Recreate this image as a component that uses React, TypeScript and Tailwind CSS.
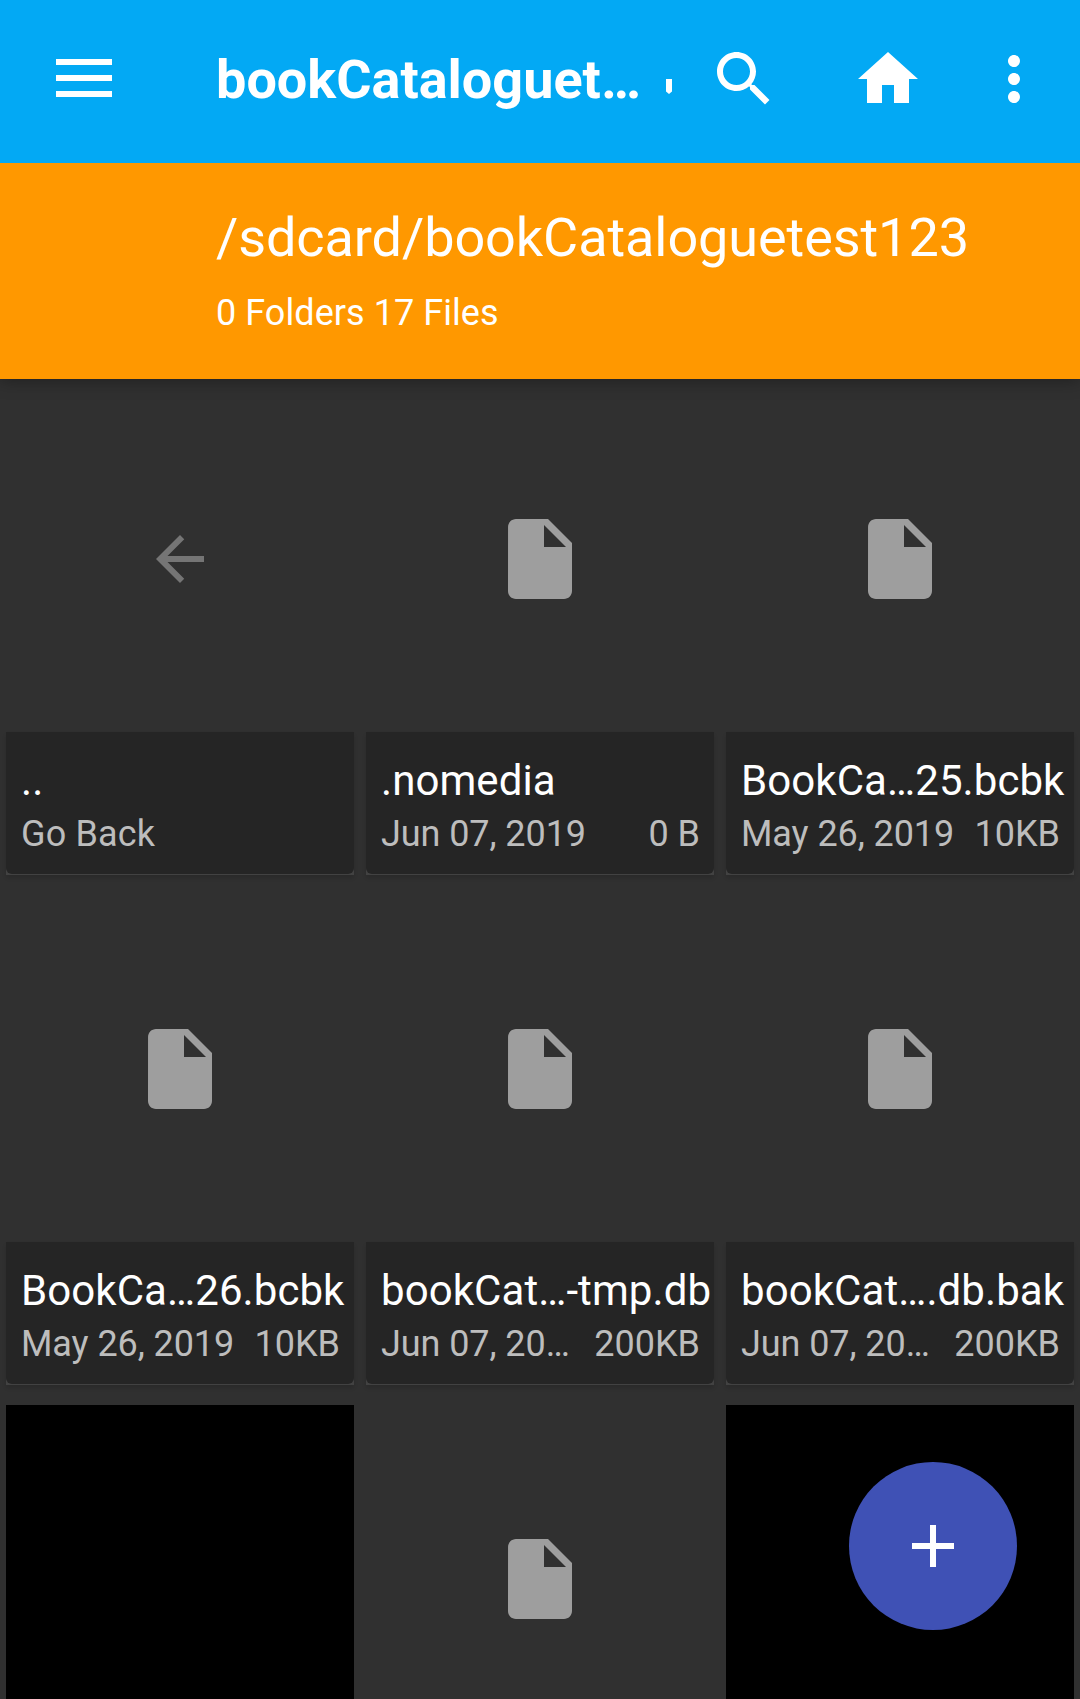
import React from 'react';

type Entry = {
  name?: string;
  date?: string;
  size?: string;
  kind: 'back' | 'file' | 'thumb';
};

const entries: Entry[] = [
  { name: '..', date: 'Go Back', kind: 'back' },
  { name: '.nomedia', date: 'Jun 07, 2019', size: '0 B', kind: 'file' },
  { name: 'BookCa…25.bcbk', date: 'May 26, 2019', size: '10KB', kind: 'file' },
  { name: 'BookCa…26.bcbk', date: 'May 26, 2019', size: '10KB', kind: 'file' },
  { name: 'bookCat…-tmp.db', date: 'Jun 07, 20…', size: '200KB', kind: 'file' },
  { name: 'bookCat….db.bak', date: 'Jun 07, 20…', size: '200KB', kind: 'file' },
  { kind: 'thumb' },
  { kind: 'file' },
  { kind: 'thumb' },
];

function Icon({ d, className }: { d: string; className: string }) {
  return (
    <svg viewBox="0 0 24 24" fill="currentColor" className={className}>
      <path d={d} />
    </svg>
  );
}

const paths = {
  search:
    'M15.5 14h-.79l-.28-.27C15.41 12.59 16 11.11 16 9.5 16 5.91 13.09 3 9.5 3S3 5.91 3 9.5 5.91 16 9.5 16c1.61 0 3.09-.59 4.23-1.57l.27.28v.79l5 4.99L20.49 19l-4.99-5zm-6 0C7.01 14 5 11.99 5 9.5S7.01 5 9.5 5 14 7.01 14 9.5 11.99 14 9.5 14z',
  home: 'M10 20v-6h4v6h5v-8h3L12 3 2 12h3v8z',
  more: 'M12 8c1.1 0 2-.9 2-2s-.9-2-2-2-2 .9-2 2 .9 2 2 2zm0 2c-1.1 0-2 .9-2 2s.9 2 2 2 2-.9 2-2-.9-2-2-2zm0 6c-1.1 0-2 .9-2 2s.9 2 2 2 2-.9 2-2-.9-2-2-2z',
  file: 'M6 2c-1.1 0-1.99.9-1.99 2L4 20c0 1.1.89 2 1.99 2H18c1.1 0 2-.9 2-2V8l-6-6H6zm7 7V3.5L18.5 9H13z',
  back: 'M20 11H7.83l5.59-5.59L12 4l-8 8 8 8 1.41-1.41L7.83 13H20v-2z',
  add: 'M19 13h-6v6h-2v-6H5v-2h6V5h2v6h6v2z',
};

function Tile({ entry }: { entry: Entry }) {
  return (
    <div className="h-[510px] px-1.5">
      <div
        className={
          entry.kind === 'thumb'
            ? 'h-[347px] bg-black'
            : 'flex h-[347px] items-center justify-center'
        }
      >
        {entry.kind === 'file' && <Icon d={paths.file} className="size-24 text-[#9e9e9e]" />}
        {entry.kind === 'back' && <Icon d={paths.back} className="size-[72px] text-[#757575]" />}
      </div>
      {entry.name && (
        <div className="h-[143px] bg-[#424242] pb-px shadow-[0_3px_4px_rgba(0,0,0,0.12)]">
          <div className="h-[142px] rounded-b-[6px] bg-[#252525] pt-6 pr-3.5 pl-[15px]">
            <div className="h-[57px] text-[42px] leading-[49px] tracking-[0.08px] whitespace-nowrap text-white">
              {entry.name}
            </div>
            <div className="flex justify-between text-[36px] leading-[42px] whitespace-nowrap text-[#bdbdbd]">
              <span className={entry.kind === 'back' ? 'tracking-[0.15px]' : 'tracking-[-0.08px]'}>
                {entry.date}
              </span>
              <span>{entry.size}</span>
            </div>
          </div>
        </div>
      )}
    </div>
  );
}

export default function App() {
  return (
    <div className="relative flex h-[1699px] w-[1080px] flex-col overflow-hidden bg-[#303030] font-['Roboto',sans-serif]">
      <header className="relative shadow-[0_2px_16px_rgba(0,0,0,0.34)]">
        <div className="flex h-[163px] items-center bg-[#03a9f4] pb-[7px] text-white">
          <button className="ml-14 flex w-14 flex-col gap-2.5" aria-label="Menu">
            <span className="h-1.5 bg-white" />
            <span className="h-1.5 bg-white" />
            <span className="h-1.5 bg-white" />
          </button>
          <div className="mt-1 ml-[104px] w-[450px] text-[54px] leading-[64px] font-bold whitespace-nowrap">
            bookCataloguet…
          </div>
          <svg viewBox="0 0 6 15" className="mt-[17px] h-[15px] w-1.5" fill="currentColor">
            <path d="M0 0h6v12.5L3 15 0 12.5z" />
          </svg>
          <Icon d={paths.search} className="mt-0.5 ml-9 size-[72px] shrink-0" />
          <Icon d={paths.home} className="mt-0.5 ml-[72px] size-[72px] shrink-0" />
          <Icon d={paths.more} className="mt-0.5 ml-[54px] size-[72px] shrink-0" />
        </div>
        <div className="h-[216px] bg-[#ff9800] pt-[43px] pl-[216px] text-white">
          <div className="h-[86px] text-[54px] leading-[64px] tracking-[-0.08px] whitespace-nowrap">
            /sdcard/bookCataloguetest123
          </div>
          <div className="text-[36px] leading-[42px] tracking-[0.06px]">0 Folders 17 Files</div>
        </div>
      </header>
      <main className="grid grid-cols-3 pt-1.5">
        {entries.map((entry, i) => (
          <Tile key={i} entry={entry} />
        ))}
      </main>
      <button
        aria-label="Add"
        className="absolute top-[1462px] left-[849px] flex size-[168px] items-center justify-center rounded-full bg-[#3f51b5] text-white"
      >
        <Icon d={paths.add} className="size-[72px]" />
      </button>
    </div>
  );
}
